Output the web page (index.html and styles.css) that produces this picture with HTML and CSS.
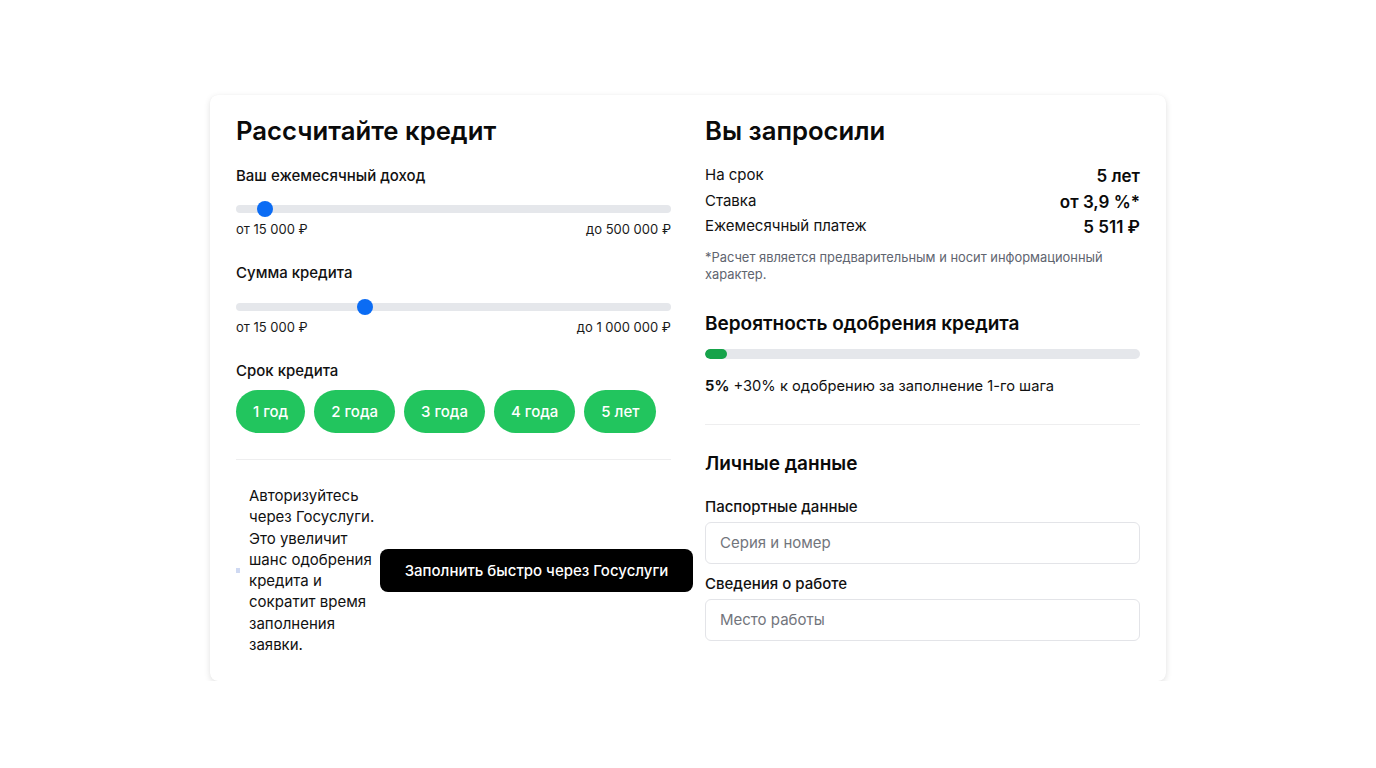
FILE: index.html
```html
<!DOCTYPE html>
<html lang="ru">
<head>
<meta charset="utf-8">
<title>Кредит</title>
<link rel="stylesheet" href="styles.css">
</head>
<body>
<div class="card">
  <div class="col">
    <h2 class="title">Рассчитайте кредит</h2>

    <div class="label first">Ваш ежемесячный доход</div>
    <div class="slider"><div class="track"></div><div class="thumb" style="left: 21px"></div></div>
    <div class="range"><span>от 15 000 ₽</span><span>до 500 000 ₽</span></div>

    <div class="label">Сумма кредита</div>
    <div class="slider"><div class="track"></div><div class="thumb" style="left: 121px"></div></div>
    <div class="range"><span>от 15 000 ₽</span><span>до 1 000 000 ₽</span></div>

    <div class="label term-label">Срок кредита</div>
    <div class="terms">
      <button class="term">1 год</button>
      <button class="term">2 года</button>
      <button class="term">3 года</button>
      <button class="term">4 года</button>
      <button class="term">5 лет</button>
    </div>

    <div class="divider left-divider"></div>

    <div class="gos">
      <span class="broken"></span>
      <p class="gos-text">Авторизуйтесь через Госуслуги. Это увеличит шанс одобрения кредита и сократит время заполнения заявки.</p>
      <button class="gos-btn">Заполнить быстро через Госуслуги</button>
    </div>
  </div>

  <div class="col">
    <h2 class="title">Вы запросили</h2>
    <div class="rows">
      <div class="row"><span class="row-label">На срок</span><span class="row-value">5 лет</span></div>
      <div class="row"><span class="row-label">Ставка</span><span class="row-value">от 3,9 %*</span></div>
      <div class="row"><span class="row-label">Ежемесячный платеж</span><span class="row-value">5 511 ₽</span></div>
    </div>
    <p class="note">*Расчет является предварительным и носит информационный характер.</p>

    <h3 class="subtitle prob">Вероятность одобрения кредита</h3>
    <div class="progress"><div class="progress-fill" style="width: 5%"></div></div>
    <p class="prob-text"><b>5%</b> +30% к одобрению за заполнение 1-го шага</p>

    <div class="divider right-divider"></div>

    <h3 class="subtitle personal">Личные данные</h3>
    <div class="label passport">Паспортные данные</div>
    <input class="input" type="text" placeholder="Серия и номер">
    <div class="label work">Сведения о работе</div>
    <input class="input" type="text" placeholder="Место работы">
  </div>
</div>
</body>
</html>
```

FILE: styles.css
```css
* { box-sizing: border-box; }

html, body {
  margin: 0;
  padding: 0;
  background: #ffffff;
}

body {
  font-family: Inter, "Noto Sans", sans-serif;
  color: #111111;
}

.card {
  width: 956px;
  margin: 95px auto 0;
  padding: 20px 26px 26px;
  background: #ffffff;
  border-radius: 8px;
  box-shadow: 0 2px 6px rgba(0, 0, 0, 0.12), 0 0 1px rgba(0, 0, 0, 0.05);
  display: grid;
  grid-template-columns: 435px 435px;
  column-gap: 34px;
  align-items: start;
}

.col {
  display: flex;
  flex-direction: column;
  min-width: 0;
}

.title {
  margin: 0;
  font-size: 25.7px;
  line-height: 31px;
  font-weight: 600;
  color: #0a0a0a;
}

.label {
  font-size: 15px;
  line-height: 22px;
  font-weight: 500;
  color: #111;
  margin-top: 24px;
}

.label.first { margin-top: 18.5px; }
.label.term-label { margin-top: 24.5px; }

.slider {
  position: relative;
  height: 16px;
  margin-top: 14.5px;
}

.track {
  position: absolute;
  left: 0;
  right: 0;
  top: 4px;
  height: 8px;
  border-radius: 4px;
  background: #e5e7eb;
}

.thumb {
  position: absolute;
  top: 0;
  width: 16px;
  height: 16px;
  border-radius: 50%;
  background: #0b6cf4;
}

.range {
  display: flex;
  justify-content: space-between;
  font-size: 13px;
  line-height: 18px;
  color: #1a1a1a;
  margin-top: 3px;
}

.terms {
  display: flex;
  gap: 9px;
  margin-top: 8px;
}

.term {
  border: 0;
  height: 43px;
  padding: 0 17px;
  border-radius: 22px;
  background: #22c55e;
  color: #ffffff;
  font-family: inherit;
  font-size: 15px;
  font-weight: 500;
}

.divider {
  height: 1px;
  background: #eeeeef;
}

.left-divider { margin-top: 26px; }

.gos {
  display: flex;
  align-items: center;
  margin-top: 25px;
}

.broken {
  width: 4px;
  height: 5px;
  flex-shrink: 0;
  background: #cfd9f2;
  margin-right: 9px;
}

.gos-text {
  margin: 0;
  width: 128px;
  flex-shrink: 0;
  font-size: 15px;
  line-height: 21.3px;
  color: #111;
}

.gos-btn {
  flex-shrink: 0;
  margin-left: 3px;
  width: 313px;
  height: 43px;
  border: 0;
  border-radius: 8px;
  background: #000000;
  color: #ffffff;
  font-family: inherit;
  font-size: 15px;
  font-weight: 500;
  white-space: nowrap;
}

.rows {
  margin-top: 18px;
  display: flex;
  flex-direction: column;
}

.row {
  display: flex;
  justify-content: space-between;
}

.row-label {
  font-size: 15px;
  line-height: 22.5px;
  color: #111;
}

.row-value {
  font-size: 17px;
  line-height: 25.5px;
  font-weight: 600;
  color: #0a0a0a;
}

.note {
  margin: 8.5px 0 0;
  font-size: 12.9px;
  line-height: 17px;
  color: #5f6570;
}

.subtitle {
  margin: 0;
  font-size: 19px;
  line-height: 24px;
  font-weight: 600;
  color: #0a0a0a;
}

.subtitle.prob { margin-top: 28.5px; }

.progress {
  margin-top: 13px;
  height: 10px;
  border-radius: 5px;
  background: #e5e7eb;
  overflow: hidden;
}

.progress-fill {
  height: 100%;
  border-radius: 5px;
  background: #16a34a;
}

.prob-text {
  margin: 17.5px 0 0;
  font-size: 14.7px;
  line-height: 20px;
  color: #111;
}

.prob-text b { font-weight: 700; }

.right-divider { margin-top: 28px; }

.subtitle.personal { margin-top: 26.5px; }

.label.passport { margin-top: 20.5px; }

.label.work { margin-top: 9.5px; }

.input {
  display: block;
  width: 100%;
  height: 42px;
  margin-top: 3.5px;
  padding: 0 14px;
  border: 1px solid #e3e4e8;
  border-radius: 6px;
  font-family: inherit;
  font-size: 15px;
  color: #111;
  background: #fff;
  outline: none;
}

.input::placeholder { color: #72757c; }
```
